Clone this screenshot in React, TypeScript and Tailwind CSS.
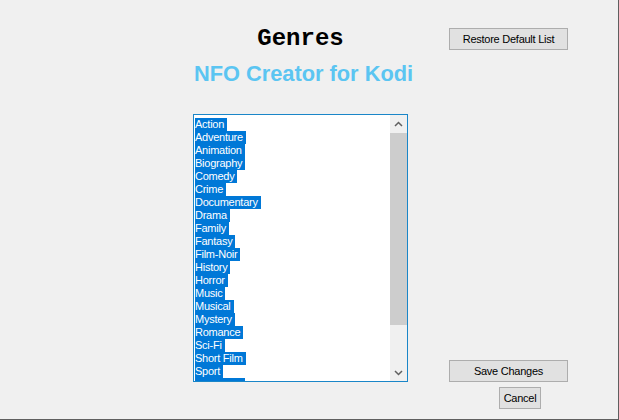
const genres = [
  "Action",
  "Adventure",
  "Animation",
  "Biography",
  "Comedy",
  "Crime",
  "Documentary",
  "Drama",
  "Family",
  "Fantasy",
  "Film-Noir",
  "History",
  "Horror",
  "Music",
  "Musical",
  "Mystery",
  "Romance",
  "Sci-Fi",
  "Short Film",
  "Sport",
];

const ui = "font-['Liberation_Sans',Arial,sans-serif] text-[11px] tracking-[-0.25px] text-black";

function WinButton({ label, className }: { label: string; className: string }) {
  return (
    <button
      type="button"
      className={`${ui} flex items-center justify-center border border-[#adadad] bg-[#e1e1e1] leading-none ${className}`}
    >
      {label}
    </button>
  );
}

function Chevron({ up }: { up?: boolean }) {
  return (
    <svg width="9" height="6" viewBox="0 0 9 6" className="block">
      <polyline
        points={up ? "1,5 4.5,1.5 8,5" : "1,1 4.5,4.5 8,1"}
        fill="none"
        stroke="#606060"
        strokeWidth="1.5"
      />
    </svg>
  );
}

function GenreBox() {
  return (
    <div className="mt-[28px] flex h-[268px] w-[215px] border border-[#1a86c8] bg-white">
      <div className="flex-1 overflow-hidden pl-[1px] pt-[3px]">
        {genres.map((g) => (
          <div key={g} className="flex h-[13px]">
            <span className={`${ui} bg-[#0078d7] pr-[3px] leading-[13px] text-white`}>{g}</span>
          </div>
        ))}
        {/* next line of the selection, scrolled just out of view */}
        <div className="h-[13px] w-[50px] bg-[#0078d7]" />
      </div>
      <div className="flex w-[17px] flex-col bg-[#f0f0f0]">
        <div className="flex h-[17px] items-center justify-center">
          <Chevron up />
        </div>
        <div className="mt-[1px] h-[192px] bg-[#cdcdcd]" />
        <div className="flex-1" />
        <div className="flex h-[17px] items-center justify-center">
          <Chevron />
        </div>
      </div>
    </div>
  );
}

export default function App() {
  return (
    <div className="flex h-[420px] w-[619px] border-b border-r border-[#5f5f5f] bg-[#f0f0f0] pl-[193px]">
      <div className="flex w-[215px] flex-col items-center pt-[25px]">
        <div className="font-['Liberation_Mono','Courier_New',monospace] text-[24px] font-bold leading-[28px] text-black">
          Genres
        </div>
        <div className="ml-[6px] mt-[8px] whitespace-nowrap font-['Liberation_Sans',Arial,sans-serif] text-[21.8px] font-bold leading-[25px] text-[#5bc5f2]">
          NFO Creator for Kodi
        </div>
        <GenreBox />
      </div>
      <div className="ml-[41px] flex w-[119px] flex-col pb-[10px] pt-[28px]">
        <WinButton label="Restore Default List" className="h-[22px] w-[119px]" />
        <div className="flex-1" />
        <WinButton label="Save Changes" className="h-[22px] w-[119px]" />
        <WinButton label="Cancel" className="ml-[50px] mt-[5px] h-[22px] w-[42px]" />
      </div>
    </div>
  );
}
